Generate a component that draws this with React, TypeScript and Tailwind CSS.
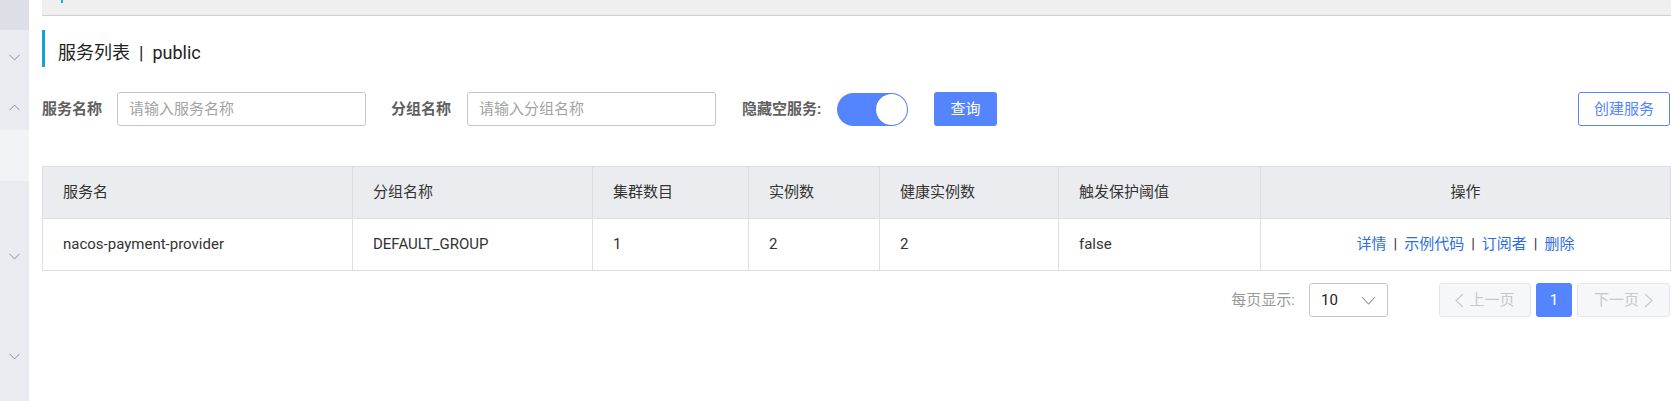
import React from "react";

function ChevronDown({ up = false }: { up?: boolean }) {
  return (
    <svg width="11" height="7" viewBox="0 0 11 7" fill="none">
      <path
        d={up ? "M0.5 6.2 L5.5 1 L10.5 6.2" : "M0.5 0.8 L5.5 6 L10.5 0.8"}
        stroke="#8b9099"
        strokeWidth="1"
      />
    </svg>
  );
}

function Chevron({ dir, color, w = 9, h = 15 }: { dir: "left" | "right" | "down"; color: string; w?: number; h?: number }) {
  let d = "";
  if (dir === "left") d = `M${w - 1} 1 L1 ${h / 2} L${w - 1} ${h - 1}`;
  if (dir === "right") d = `M1 1 L${w - 1} ${h / 2} L1 ${h - 1}`;
  if (dir === "down") d = `M1 1 L${w / 2} ${h - 1} L${w - 1} 1`;
  return (
    <svg width={w} height={h} viewBox={`0 0 ${w} ${h}`} fill="none">
      <path d={d} stroke={color} strokeWidth="1.1" />
    </svg>
  );
}

const headers = ["服务名", "分组名称", "集群数目", "实例数", "健康实例数", "触发保护阈值"];
const row = ["nacos-payment-provider", "DEFAULT_GROUP", "1", "2", "2", "false"];
const links = ["详情", "示例代码", "订阅者", "删除"];

export default function App() {
  return (
    <div className="flex w-[1671px] h-[401px] overflow-hidden bg-white font-['Roboto','Noto_Sans_CJK_SC',sans-serif] text-[#333]">
      <aside className="w-[29px] shrink-0 flex flex-col bg-[#e9ebf0]">
        <div className="h-[30px] bg-[#dcdfe6]" />
        <div className="h-[54px] flex items-center justify-center">
          <ChevronDown />
        </div>
        <div className="h-[46px] flex items-center justify-center">
          <ChevronDown up />
        </div>
        <div className="h-[51px] bg-[#f2f3f7]" />
        <div className="h-[150px] flex items-center justify-center">
          <ChevronDown />
        </div>
        <div className="h-[50px] flex items-center justify-center">
          <ChevronDown />
        </div>
        <div className="flex-1" />
      </aside>

      <main className="flex-1 pl-[13px] flex flex-col">
        <div className="relative h-[16px] bg-[#efefef] border-b border-[#d0d0d0]">
          <div className="absolute left-[19px] top-0 w-[2px] h-[3px] bg-[#1fa9e0]" />
        </div>

        <div className="mt-[14px] h-[37px] border-l-[3px] border-[#1a9fd9] pl-[13px] pt-[9px] flex items-center text-[18px] leading-none text-[#222]">
          <span>服务列表</span>
          <span className="mx-[9px]">|</span>
          <span>public</span>
        </div>

        <div className="mt-[25px] h-[34px] w-[1628px] flex items-center text-[15px]">
          <span className="font-bold text-[#5f5f5f] w-[60px]">服务名称</span>
          <div className="ml-[15px] w-[249px] h-[34px] border border-[#c4c6cf] rounded-[3px] flex items-center pl-[11px] text-[#a3a3a3]">
            请输入服务名称
          </div>
          <span className="ml-[25px] font-bold text-[#5f5f5f] w-[61px]">分组名称</span>
          <div className="ml-[15px] w-[249px] h-[34px] border border-[#c4c6cf] rounded-[3px] flex items-center pl-[11px] text-[#a3a3a3]">
            请输入分组名称
          </div>
          <span className="ml-[26px] font-bold text-[#5f5f5f] w-[80px]">隐藏空服务:</span>
          <div className="ml-[15px] w-[71px] h-[33px] rounded-full bg-[#5584ff] flex items-center justify-end pr-[1px]">
            <div className="w-[31px] h-[31px] rounded-full bg-white shadow-[0_0_1px_rgba(0,0,0,0.3)]" />
          </div>
          <div className="ml-[26px] w-[63px] h-[34px] rounded-[3px] bg-[#5584ff] text-white flex items-center justify-center">
            查询
          </div>
          <div className="ml-auto w-[92px] h-[34px] rounded-[3px] border border-[#5584ff] text-[#5584ff] flex items-center justify-center">
            创建服务
          </div>
        </div>

        <table className="mt-[40px] w-[1628px] table-fixed border-collapse border border-[#dcdee3] text-[15px]">
          <colgroup>
            <col className="w-[310px]" />
            <col className="w-[240px]" />
            <col className="w-[156px]" />
            <col className="w-[131px]" />
            <col className="w-[179px]" />
            <col className="w-[202px]" />
            <col className="w-[410px]" />
          </colgroup>
          <thead>
            <tr className="h-[52px] bg-[#ebecf0]">
              {headers.map((h) => (
                <th key={h} className="border border-[#dcdee3] pl-[20px] text-left font-normal text-[#333]">
                  {h}
                </th>
              ))}
              <th className="border border-[#dcdee3] text-center font-normal text-[#333]">操作</th>
            </tr>
          </thead>
          <tbody>
            <tr className="h-[52px]">
              {row.map((c, i) => (
                <td key={i} className="border border-[#dcdee3] pl-[20px] text-left text-[#333]">
                  {c}
                </td>
              ))}
              <td className="border border-[#dcdee3] text-center">
                {links.map((l, i) => (
                  <React.Fragment key={l}>
                    {i > 0 && <span className="mx-[7px] text-[#333]">|</span>}
                    <span className="text-[#2e6fdf]">{l}</span>
                  </React.Fragment>
                ))}
              </td>
            </tr>
          </tbody>
        </table>

        <div className="mt-[12px] w-[1628px] flex items-center justify-end text-[15px]">
          <span className="text-[#999]">每页显示:</span>
          <div className="ml-[14px] w-[79px] h-[34px] border border-[#c4c6cf] rounded-[3px] flex items-center justify-between pl-[11px] pr-[11px] text-[#222]">
            <span>10</span>
            <Chevron dir="down" color="#8d929b" w={15} h={9} />
          </div>
          <div className="ml-[51px] w-[92px] h-[34px] border border-[#e4e6eb] bg-[#f6f7f9] rounded-[3px] flex items-center justify-center gap-[5px] text-[#c6c8ce]">
            <Chevron dir="left" color="#c6c8ce" />
            <span>上一页</span>
          </div>
          <div className="ml-[5px] w-[36px] h-[34px] rounded-[3px] bg-[#5584ff] text-white flex items-center justify-center">
            1
          </div>
          <div className="ml-[5px] w-[93px] h-[34px] border border-[#e4e6eb] bg-[#f6f7f9] rounded-[3px] flex items-center justify-center gap-[5px] text-[#c6c8ce]">
            <span>下一页</span>
            <Chevron dir="right" color="#c6c8ce" />
          </div>
        </div>
      </main>
    </div>
  );
}
